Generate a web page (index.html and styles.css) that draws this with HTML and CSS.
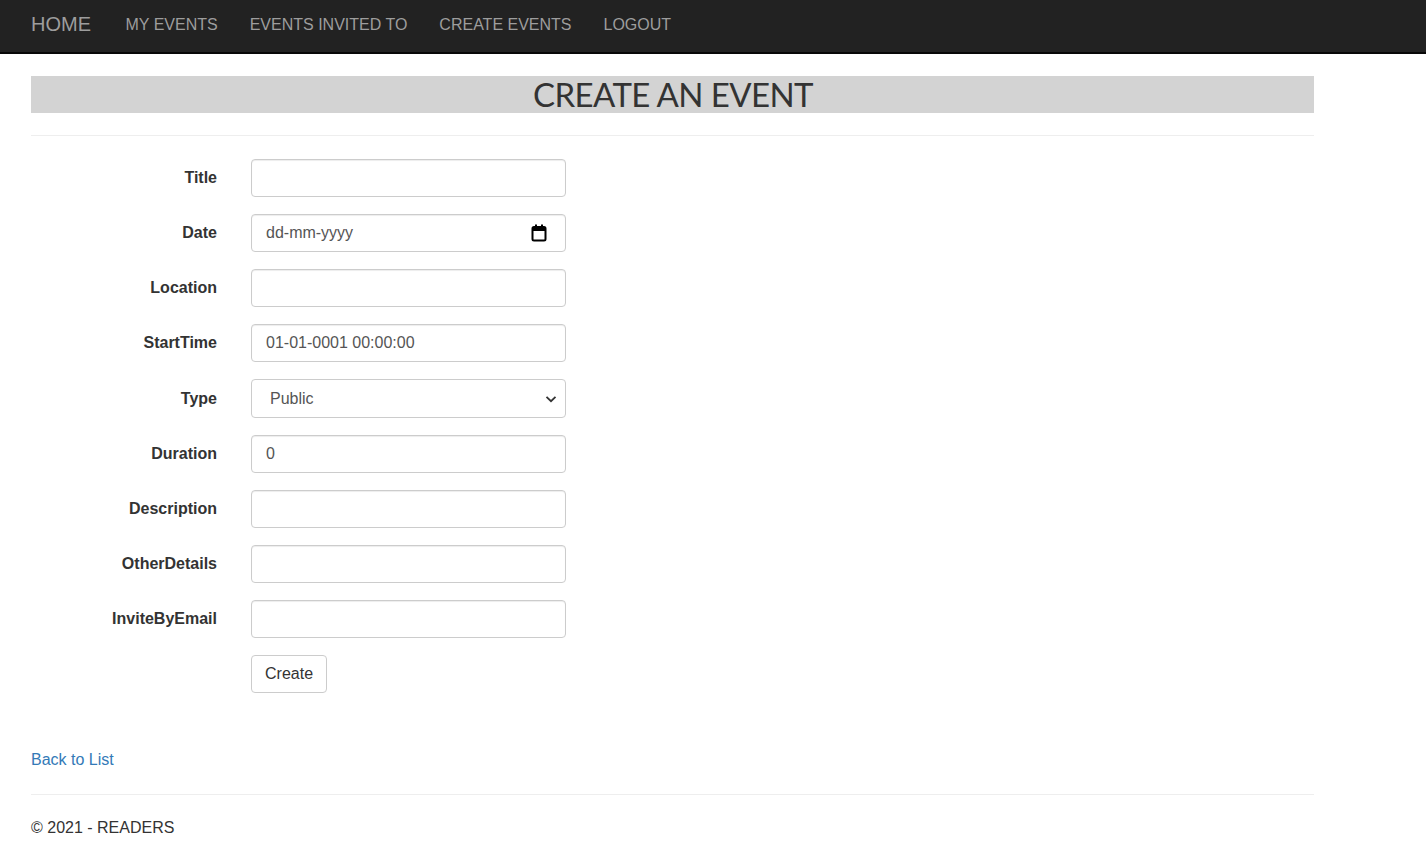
FILE: index.html
```html
<!DOCTYPE html>
<html>
<head>
<meta charset="utf-8">
<link rel="stylesheet" href="styles.css">
</head>
<body>
<nav class="navbar">
  <a class="brand" href="#">HOME</a>
  <a class="nav-link" href="#">MY EVENTS</a>
  <a class="nav-link" href="#">EVENTS INVITED TO</a>
  <a class="nav-link" href="#">CREATE EVENTS</a>
  <a class="nav-link" href="#">LOGOUT</a>
</nav>
<main class="container">
  <h1 class="page-title">CREATE AN EVENT</h1>
  <hr class="rule rule-top">
  <form class="form">
    <label class="lbl">Title</label>
    <input class="field" type="text">
    <label class="lbl">Date</label>
    <div class="field field-date"><span class="ph">dd-mm-yyyy</span>
      <svg class="cal" width="16" height="18" viewBox="0 0 16 18"><rect x="1.5" y="3" width="13" height="13.5" rx="1.5" fill="none" stroke="#000" stroke-width="2"/><rect x="1.5" y="3" width="13" height="4" fill="#000"/><rect x="4" y="0.5" width="2" height="3.5" fill="#000"/><rect x="10" y="0.5" width="2" height="3.5" fill="#000"/></svg>
    </div>
    <label class="lbl">Location</label>
    <input class="field" type="text">
    <label class="lbl">StartTime</label>
    <input class="field" type="text" value="01-01-0001 00:00:00">
    <label class="lbl">Type</label>
    <div class="field field-select"><span class="sel-text">Public</span>
      <svg class="chev" width="12" height="8" viewBox="0 0 12 8"><path d="M1.5 1.8 L6 6.2 L10.5 1.8" fill="none" stroke="#333" stroke-width="1.8"/></svg>
    </div>
    <label class="lbl">Duration</label>
    <input class="field" type="text" value="0">
    <label class="lbl">Description</label>
    <input class="field" type="text">
    <label class="lbl">OtherDetails</label>
    <input class="field" type="text">
    <label class="lbl">InviteByEmail</label>
    <input class="field" type="text">
    <span></span>
    <div><button class="btn" type="button">Create</button></div>
  </form>
  <div class="back"><a href="#">Back to List</a></div>
  <hr class="rule rule-bottom">
  <footer class="footer">© 2021 - READERS</footer>
</main>
</body>
</html>
```
FILE: styles.css
```css
* { box-sizing: border-box; }
html, body { margin: 0; padding: 0; }
body {
  font-family: "Liberation Sans", Arial, sans-serif;
  font-size: 16px;
  color: #333;
  background: #fff;
}
.navbar {
  height: 54px;
  background: #222;
  border-bottom: 2px solid #080808;
  display: flex;
  align-items: center;
  padding-left: 31px;
}
.navbar a { text-decoration: none; color: #9d9d9d; }
.brand { font-size: 20px; margin-right: 18.5px; padding-bottom: 3px; }
.nav-link { font-size: 16px; padding: 0 16px 3px; }
.container { width: 1283px; margin-left: 31px; }
.page-title {
  margin: 22px 0 0;
  height: 37px;
  background: #d3d3d3;
  text-align: center;
  font-family: "Lato", sans-serif;
  font-weight: 400;
  font-size: 33px;
  line-height: 37px;
  color: #333;
  letter-spacing: -0.6px;
  padding-left: 1px;
}
.rule { border: 0; border-top: 1px solid #eee; margin: 0; }
.rule-top { margin-top: 22px; }
.form {
  display: grid;
  grid-template-columns: 186px 315px;
  column-gap: 34px;
  row-gap: 17px;
  align-items: center;
  margin-top: 23px;
}
.lbl { text-align: right; font-weight: bold; font-size: 16px; }
.field {
  height: 38px;
  width: 315px;
  border: 1px solid #ccc;
  border-radius: 4px;
  padding: 0 14px;
  font-family: "Liberation Sans", Arial, sans-serif;
  font-size: 16px;
  color: #555;
  background: #fff;
  box-shadow: inset 0 1px 1px rgba(0,0,0,0.075);
  display: flex;
  align-items: center;
}
.field-date { justify-content: space-between; padding-right: 18px; }
.ph { color: #555; }
.cal { display: block; }
.field-select { height: 39px; justify-content: space-between; padding-left: 18px; padding-right: 8px; box-shadow: none; }
.sel-text { color: #555; }
.btn {
  height: 38px;
  padding: 0 13px;
  border: 1px solid #ccc;
  border-radius: 4px;
  background: #fff;
  color: #333;
  font-family: "Liberation Sans", Arial, sans-serif;
  font-size: 16px;
}
.back { margin-top: 57px; font-size: 16px; line-height: 20px; }
.back a { color: #337ab7; text-decoration: none; }
.rule-bottom { margin-top: 24px; }
.footer { margin-top: 23px; font-size: 16px; line-height: 20px; }
```
